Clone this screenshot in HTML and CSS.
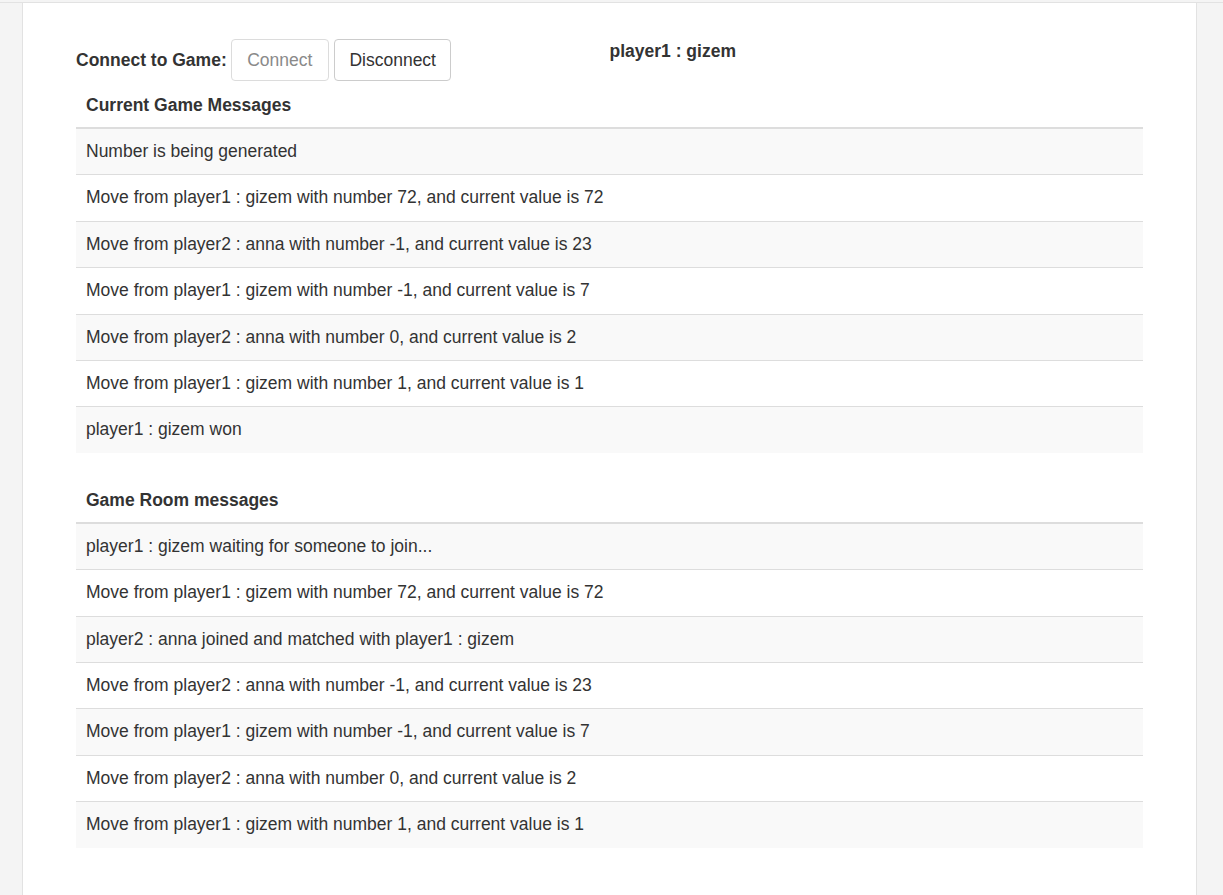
FILE: index.html
```html
<!DOCTYPE html>
<html>
<head>
<meta charset="utf-8">
<title>Game</title>
<link rel="stylesheet" href="styles.css">
</head>
<body>
<div class="page">
  <div class="card">
    <div class="top-row">
      <div class="col">
        <form class="connect-form">
          <label class="connect-label">Connect to Game:</label>
          <button type="button" class="btn btn-disabled">Connect</button>
          <button type="button" class="btn">Disconnect</button>
        </form>
      </div>
      <div class="col">
        <div class="player-name">player1 : gizem</div>
      </div>
    </div>

    <table class="msg-table">
      <thead>
        <tr><th>Current Game Messages</th></tr>
      </thead>
      <tbody>
        <tr><td>Number is being generated</td></tr>
        <tr><td>Move from player1 : gizem with number 72, and current value is 72</td></tr>
        <tr><td>Move from player2 : anna with number -1, and current value is 23</td></tr>
        <tr><td>Move from player1 : gizem with number -1, and current value is 7</td></tr>
        <tr><td>Move from player2 : anna with number 0, and current value is 2</td></tr>
        <tr><td>Move from player1 : gizem with number 1, and current value is 1</td></tr>
        <tr><td>player1 : gizem won</td></tr>
      </tbody>
    </table>

    <table class="msg-table">
      <thead>
        <tr><th>Game Room messages</th></tr>
      </thead>
      <tbody>
        <tr><td>player1 : gizem waiting for someone to join...</td></tr>
        <tr><td>Move from player1 : gizem with number 72, and current value is 72</td></tr>
        <tr><td>player2 : anna joined and matched with player1 : gizem</td></tr>
        <tr><td>Move from player2 : anna with number -1, and current value is 23</td></tr>
        <tr><td>Move from player1 : gizem with number -1, and current value is 7</td></tr>
        <tr><td>Move from player2 : anna with number 0, and current value is 2</td></tr>
        <tr><td>Move from player1 : gizem with number 1, and current value is 1</td></tr>
      </tbody>
    </table>
  </div>
</div>
</body>
</html>
```

FILE: styles.css
```css
html, body {
  margin: 0;
  padding: 0;
  height: 100%;
}

body {
  background: #f4f4f4;
  font-family: "Liberation Sans", Arial, Helvetica, sans-serif;
  font-size: 17.5px;
  color: #333;
  overflow: hidden;
}

.page {
  margin-top: 2px;
  border-top: 1px solid #e2e2e2;
  padding: 0 26px 0 22px;
  min-height: 100%;
  box-sizing: border-box;
}

.card {
  background: #fff;
  border: 1px solid #e2e2e2;
  border-top: none;
  border-radius: 0 0 5px 5px;
  padding: 36px 53px 60px 53px;
  min-height: 900px;
  box-sizing: border-box;
}

.top-row {
  display: flex;
}

.col {
  flex: 1 1 0;
}

.connect-form {
  display: flex;
  align-items: center;
  margin: 0;
}

.connect-label {
  font-weight: bold;
  margin-right: 4px;
  line-height: 24px;
}

.btn {
  font-family: inherit;
  font-size: 17.5px;
  line-height: 24px;
  padding: 8px 14.5px;
  background: #fff;
  color: #333;
  border: 1px solid #ccc;
  border-radius: 4px;
  margin-right: 6px;
  cursor: pointer;
}

.btn-disabled {
  color: #8a8a8a;
  border-color: #dcdcdc;
  padding: 8px 15.5px;
  margin-right: 5px;
  cursor: not-allowed;
}

.player-name {
  font-weight: bold;
  line-height: 24px;
}

.msg-table {
  width: 100%;
  border-collapse: collapse;
  margin-top: 2px;
  margin-bottom: 25px;
}

.msg-table th {
  text-align: left;
  font-weight: bold;
  padding: 10px;
  line-height: 24px;
  border-bottom: 2px solid #dddddd;
}

.msg-table td {
  padding: 11px 10px;
  line-height: 23.4px;
  border-top: 1px solid #dddddd;
}

.msg-table tbody tr:first-child td {
  border-top: none;
}

.msg-table tbody tr:nth-child(odd) {
  background: #f9f9f9;
}
```
